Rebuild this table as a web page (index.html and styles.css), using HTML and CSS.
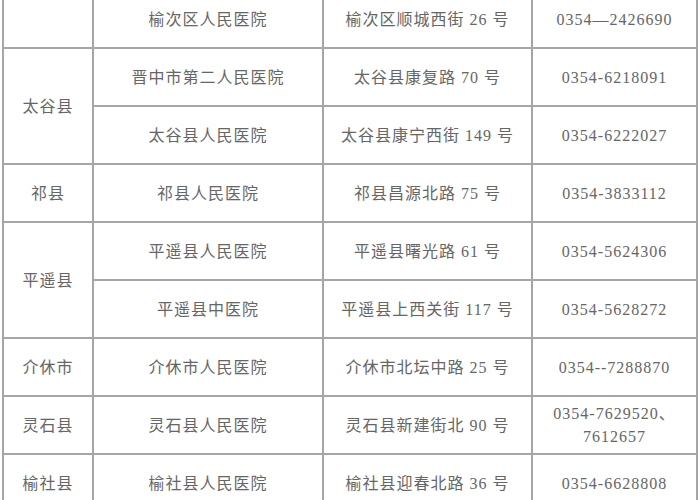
FILE: index.html
```html
<!DOCTYPE html>
<html lang="zh">
<head>
<meta charset="utf-8">
<link rel="stylesheet" href="styles.css">
</head>
<body>
<table class="hosp">
  <colgroup>
    <col class="c-county">
    <col class="c-name">
    <col class="c-addr">
    <col class="c-tel">
  </colgroup>
  <tr>
    <td></td>
    <td>榆次区人民医院</td>
    <td>榆次区顺城西街 26 号</td>
    <td>0354—2426690</td>
  </tr>
  <tr>
    <td rowspan="2">太谷县</td>
    <td>晋中市第二人民医院</td>
    <td>太谷县康复路 70 号</td>
    <td>0354-6218091</td>
  </tr>
  <tr>
    <td>太谷县人民医院</td>
    <td>太谷县康宁西街 149 号</td>
    <td>0354-6222027</td>
  </tr>
  <tr>
    <td>祁县</td>
    <td>祁县人民医院</td>
    <td>祁县昌源北路 75 号</td>
    <td>0354-3833112</td>
  </tr>
  <tr>
    <td rowspan="2">平遥县</td>
    <td>平遥县人民医院</td>
    <td>平遥县曙光路 61 号</td>
    <td>0354-5624306</td>
  </tr>
  <tr>
    <td>平遥县中医院</td>
    <td>平遥县上西关街 117 号</td>
    <td>0354-5628272</td>
  </tr>
  <tr>
    <td>介休市</td>
    <td>介休市人民医院</td>
    <td>介休市北坛中路 25 号</td>
    <td>0354--7288870</td>
  </tr>
  <tr>
    <td>灵石县</td>
    <td>灵石县人民医院</td>
    <td>灵石县新建街北 90 号</td>
    <td class="two">0354-7629520、<br>7612657</td>
  </tr>
  <tr>
    <td>榆社县</td>
    <td>榆社县人民医院</td>
    <td>榆社县迎春北路 36 号</td>
    <td>0354-6628808</td>
  </tr>
</table>
</body>
</html>
```

FILE: styles.css
```css
html, body {
  margin: 0;
  padding: 0;
  background: #ffffff;
}

body {
  overflow: hidden;
}

.hosp {
  border-collapse: collapse;
  table-layout: fixed;
  width: 694px;
  margin: -11px 0 0 2px;
  font-family: "Liberation Serif", "Noto Sans CJK SC", serif;
  font-size: 16px;
  letter-spacing: 1px;
  word-spacing: 0;
  color: #666666;
}

.c-county { width: 90px; }
.c-name { width: 230px; }
.c-addr { width: 209px; }
.c-tel { width: 165px; }

.hosp tr {
  height: 58px;
}

.hosp td {
  border: 2px solid #a6a6a6;
  text-align: center;
  vertical-align: middle;
  padding: 0;
  line-height: 23px;
  white-space: nowrap;
}
```
